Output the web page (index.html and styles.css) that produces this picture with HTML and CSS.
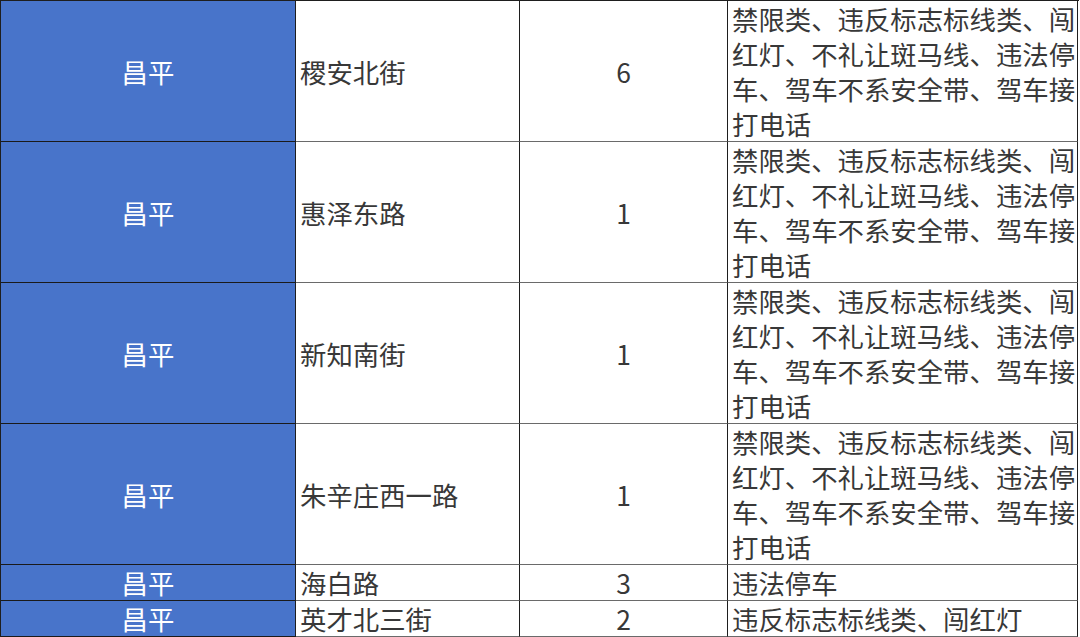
FILE: index.html
```html
<!DOCTYPE html>
<html lang="zh-CN">
<head>
<meta charset="utf-8">
<title>表格</title>
<link rel="stylesheet" href="styles.css">
</head>
<body>
<div class="grid">
  <div class="cell district tall">昌平</div>
  <div class="cell road tall">稷安北街</div>
  <div class="cell num tall">6</div>
  <div class="cell type">禁限类、违反标志标线类、闯红灯、不礼让斑马线、违法停车、驾车不系安全带、驾车接打电话</div>

  <div class="cell district tall">昌平</div>
  <div class="cell road tall">惠泽东路</div>
  <div class="cell num tall">1</div>
  <div class="cell type">禁限类、违反标志标线类、闯红灯、不礼让斑马线、违法停车、驾车不系安全带、驾车接打电话</div>

  <div class="cell district tall">昌平</div>
  <div class="cell road tall">新知南街</div>
  <div class="cell num tall">1</div>
  <div class="cell type">禁限类、违反标志标线类、闯红灯、不礼让斑马线、违法停车、驾车不系安全带、驾车接打电话</div>

  <div class="cell district tall">昌平</div>
  <div class="cell road tall">朱辛庄西一路</div>
  <div class="cell num tall">1</div>
  <div class="cell type">禁限类、违反标志标线类、闯红灯、不礼让斑马线、违法停车、驾车不系安全带、驾车接打电话</div>

  <div class="cell district">昌平</div>
  <div class="cell road">海白路</div>
  <div class="cell num">3</div>
  <div class="cell type">违法停车</div>

  <div class="cell district">昌平</div>
  <div class="cell road">英才北三街</div>
  <div class="cell num">2</div>
  <div class="cell type">违反标志标线类、闯红灯</div>
</div>
</body>
</html>
```
FILE: styles.css
```css
html, body {
  margin: 0;
  padding: 0;
  background: #ffffff;
}

body {
  font-family: "Noto Sans CJK SC", "Noto Sans", sans-serif;
  font-size: 26.4px;
  line-height: 35px;
  color: #383838;
}

.grid {
  display: grid;
  grid-template-columns: 295px 224px 208px 350px;
  grid-template-rows: 141px 141px 141px 141px 36px 36px;
  width: 1078px;
  border-top: 1px solid #1e1e1e;
  border-left: 1px solid #1e1e1e;
}

.cell {
  box-sizing: border-box;
  border-right: 1px solid #1e1e1e;
  border-bottom: 1px solid #6a6a6a;
  display: flex;
  align-items: center;
  white-space: nowrap;
}

.district {
  background: #4874ca;
  color: #ffffff;
  justify-content: center;
  border-bottom-color: #1a1a1a;
}

.road {
  padding-left: 4px;
}

.num {
  justify-content: center;
}

.type {
  display: block;
  padding-left: 4px;
  white-space: normal;
}
```
